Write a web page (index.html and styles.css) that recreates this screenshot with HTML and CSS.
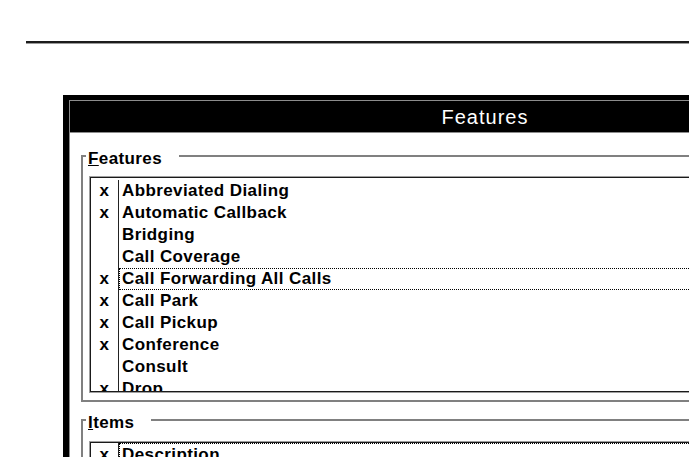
FILE: index.html
```html
<!DOCTYPE html>
<html lang="en">

<head>
    <meta charset="UTF-8" />
    <title>Features</title>
    <link rel="stylesheet" href="styles.css">
</head>

<body>
    <div class="page-rule"></div>

    <div class="dialog">
        <div class="frame">
            <div class="titlebar">Features</div>

            <div class="dialog-body">
                <fieldset class="group">
                    <legend><u>F</u>eatures</legend>
                    <ul class="listbox features-list">
                        <li class="row"><span class="check">x</span><span class="name">Abbreviated Dialing</span></li>
                        <li class="row"><span class="check">x</span><span class="name">Automatic Callback</span></li>
                        <li class="row"><span class="check"></span><span class="name">Bridging</span></li>
                        <li class="row"><span class="check"></span><span class="name">Call Coverage</span></li>
                        <li class="row focused"><span class="check">x</span><span class="name">Call Forwarding All Calls</span></li>
                        <li class="row"><span class="check">x</span><span class="name">Call Park</span></li>
                        <li class="row"><span class="check">x</span><span class="name">Call Pickup</span></li>
                        <li class="row"><span class="check">x</span><span class="name">Conference</span></li>
                        <li class="row"><span class="check"></span><span class="name">Consult</span></li>
                        <li class="row"><span class="check">x</span><span class="name">Drop</span></li>
                        <li class="row"><span class="check">x</span><span class="name">Hold</span></li>
                    </ul>
                </fieldset>

                <fieldset class="group">
                    <legend><u>I</u>tems</legend>
                    <ul class="listbox items-list">
                        <li class="row focused"><span class="check">x</span><span class="name">Description</span></li>
                    </ul>
                </fieldset>
            </div>
        </div>
    </div>
</body>

</html>
```

FILE: styles.css
```css
body {
    margin: 0;
    padding-top: 41px;
    background: #fff;
    color: #000;
    font-family: "Liberation Sans", Arial, sans-serif;
    overflow: hidden;
}

.page-rule {
    margin-left: 26px;
    height: 2px;
    background: #1c1c1c;
    border-bottom: 1px solid #9a9a9a;
}

/* modal dialog: heavy black frame, thin grey inner edge */
.dialog {
    margin: 51px 0 0 63px;
    width: 832px;
    border: 6px solid #000;
    border-top-width: 5px;
}

.frame {
    border: 1px solid #8c8c8c;
    background: #fff;
}

.titlebar {
    height: 30px;
    padding-top: 1px;
    line-height: 31px;
    background: #000;
    color: #fff;
    text-align: center;
    font-size: 20px;
    letter-spacing: 1px;
    border-bottom: 1px solid #8c8c8c;
}

.dialog-body {
    padding: 10px 11px 20px;
    height: 400px;
}

.group {
    margin: 0;
    padding: 8px 7px 8px;
    border: 2px solid #808080;
}

.group + .group {
    margin-top: 5px;
    padding-top: 9px;
}

.group legend {
    margin-left: -4px;
    padding: 6px 17px 0 2px;
    font-size: 17px;
    font-weight: bold;
    letter-spacing: 0.4px;
    line-height: 20px;
}

.listbox {
    list-style: none;
    margin: 0;
    padding: 2px 0 0;
    border: 1px solid #1a1a1a;
    box-shadow: 0 0 0 1px #a0a0a0;
    background: #fff;
    overflow: hidden;
    font-size: 17px;
    font-weight: bold;
    letter-spacing: 0.4px;
}

.features-list {
    height: 211px;
}

.items-list {
    padding-top: 0;
    height: 60px;
}

.row {
    display: flex;
    height: 22px;
    line-height: 22px;
}

.items-list .row {
    line-height: 24px;
}

.check {
    flex: none;
    width: 27px;
    text-align: center;
    border-right: 1px solid #222;
}

.name {
    flex: 1;
    padding-left: 3px;
    white-space: nowrap;
}

.focused .name {
    outline: 1px dotted #000;
    outline-offset: -1px;
}
```
